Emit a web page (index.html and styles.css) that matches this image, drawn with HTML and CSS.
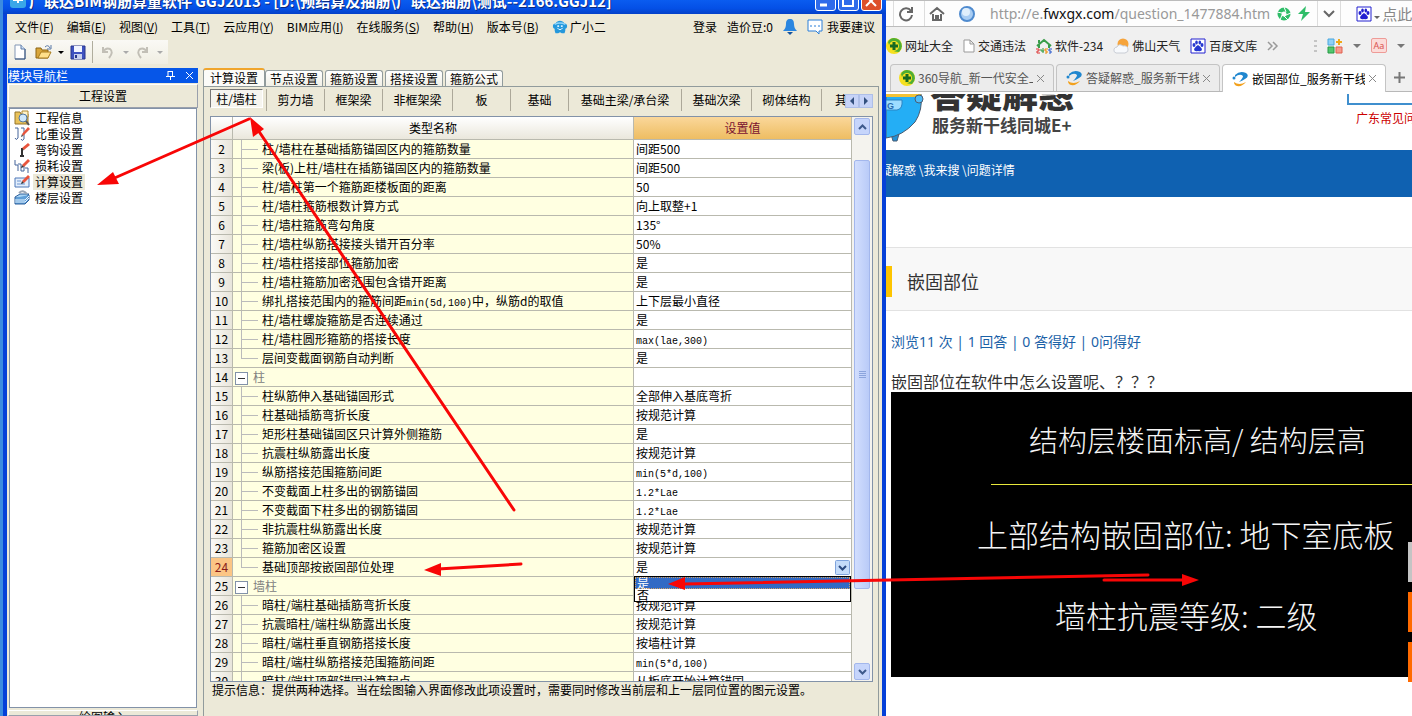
FILE: index.html
```html
<!DOCTYPE html>
<html lang="zh-CN">
<head>
<meta charset="utf-8">
<title>计算设置</title>
<link rel="stylesheet" href="styles.css">
</head>
<body>
<div class="desktop">
<section class="app">
  <header class="titlebar">
    <svg class="app-logo" width="18" height="18" viewBox="0 0 18 18"><rect x="1" y="1" width="16" height="16" rx="3" fill="#3aa7e8"/><path d="M4 9h10M9 6v6" stroke="#fff" stroke-width="2"/></svg>
    <h1 class="title">广联达BIM钢筋算量软件 GGJ2013 - [D:\预结算及抽筋\广联达抽筋\测试--2166.GGJ12]</h1>
    <button class="win-btn" aria-label="最小化"><svg width="18" height="18" viewBox="0 0 18 18"><path d="M4 13h7" stroke="#fff" stroke-width="3"/></svg></button>
    <button class="win-btn" aria-label="最大化"><svg width="18" height="18" viewBox="0 0 18 18"><path d="M4 4h10v10H4z" fill="none" stroke="#fff" stroke-width="2"/></svg></button>
    <button class="win-btn close" aria-label="关闭"><svg width="18" height="18" viewBox="0 0 18 18"><path d="M4 4l10 10M14 4L4 14" stroke="#fff" stroke-width="2"/></svg></button>
  </header>
  <div class="frame">
    <nav class="menu">
      <button>文件(<u>F</u>)</button><button>编辑(<u>E</u>)</button><button>视图(<u>V</u>)</button><button>工具(<u>T</u>)</button><button>云应用(<u>Y</u>)</button><button>BIM应用(<u>I</u>)</button><button>在线服务(<u>S</u>)</button><button>帮助(<u>H</u>)</button><button>版本号(<u>B</u>)</button>
      <button class="with-icon"><svg width="16" height="16" viewBox="0 0 18 16"><path d="M9 1c2 0 4 1 5 3 2 0 3 1 3 3s-1 3-2 3c0 2 0 3-1 5h-3l-2-1-2 1H4c-1-2-1-3-1-5-1 0-2-1-2-3s1-3 3-3c1-2 3-3 5-3z" fill="#2498dc"/><path d="M3 5q6-3 12 0" stroke="#8fd4fa" stroke-width="1.500" fill="none"/><path d="M6 9q3 4 6 0" stroke="#fff" fill="none"/><path d="M6 6h2v2H6zM10 6h2v2h-2z" fill="#d9f2ff"/></svg>广小二</button>
      <div class="account">
        <button>登录</button><span>造价豆:0</span>
        <svg width="14" height="16" viewBox="0 0 14 16"><path d="M7 0c3 0 4 2 4 5 0 3 1 5 3 7H0c2-2 3-4 3-7 0-3 1-5 4-5z" fill="#2a86e0"/><path d="M4 13h6l-3 3z" fill="#14539c"/></svg>
        <button class="with-icon suggest"><svg width="16" height="16" viewBox="0 0 16 16"><path d="M1 1h14v11h-3v3l-3-3H1z" fill="#fff" stroke="#2a7fd8"/><path d="M3 7h2M7 7h2M11 7h2" stroke="#2a7fd8"/></svg>我要建议</button>
      </div>
    </nav>
    <div class="toolbar">
      <button aria-label="新建"><svg width="14" height="16" viewBox="0 0 14 16"><path d="M2 1h6l4 4v10H2z" fill="#fff" stroke="#8397b5"/><path d="M12 5v10H2" stroke="#2f4d78" fill="none"/><path d="M8 1v4h4" fill="#cfe0f5" stroke="#5d7ba8"/></svg></button>
      <button class="open" aria-label="打开"><svg width="18" height="16" viewBox="0 0 18 16"><path d="M1 4h5l1 2h6v8H1z" fill="#d9a63a" stroke="#8c6514"/><path d="M3 14l3-6h10l-3 6z" fill="#ffe08a" stroke="#a87b1c"/><path d="M10 3q3-3 5 1m1-3v4h-4" fill="none" stroke="#5878a8"/></svg></button>
      <span class="caret"></span>
      <button class="save" aria-label="保存"><svg width="16" height="16" viewBox="0 0 16 16"><path d="M1 2h14v13H1z" fill="#3f52c0" stroke="#29358b"/><path d="M4 2h8v6H4z" fill="#f2f5ff"/><path d="M4 10h8v5H4z" fill="#c9d1ee"/><path d="M5 11h2v3H5z" fill="#29358b"/></svg></button>
      <span class="tool-sep"></span>
      <button class="undo" aria-label="撤销" disabled><svg width="14" height="14" viewBox="0 0 14 14"><path d="M2 2v5h5M2 7q3-5 7-3 4 3-1 9" fill="none" stroke="#c2bfb6" stroke-width="2"/></svg></button>
      <span class="caret off"></span>
      <button class="redo" aria-label="重做" disabled><svg width="14" height="14" viewBox="0 0 14 14"><path d="M12 2v5H7M12 7Q9 2 5 4q-4 3 1 9" fill="none" stroke="#c2bfb6" stroke-width="2"/></svg></button>
      <span class="caret off"></span>
    </div>
    <div class="work">
      <aside class="side">
        <div class="side-title"><span>模块导航栏</span>
          <button aria-label="固定"><svg width="9" height="9" viewBox="0 0 9 9"><path d="M2 0v5M6.500 0v5M2 .5h5M0 5.500h9M4.500 6v3" stroke="#fff" fill="none"/></svg></button>
          <button aria-label="关闭面板"><svg width="9" height="9" viewBox="0 0 9 9"><path d="M1 1l7 7M8 1L1 8" stroke="#fff"/></svg></button>
        </div>
        <button class="side-group">工程设置</button>
        <ul class="side-list">
          <li><svg width="16" height="16" viewBox="0 0 16 16"><path d="M1 2h5l1 2h7v10H1z" fill="#e9c25a" stroke="#94742a"/><path d="M8 1h6v6H8z" fill="#fff3c8" stroke="#b0892f"/><circle cx="9" cy="8" r="4" fill="#cfe8fb" stroke="#53779e"/><path d="M12 11l3 4" stroke="#555" stroke-width="2"/></svg><span>工程信息</span></li>
          <li><svg width="16" height="16" viewBox="0 0 16 16"><path d="M1 2h3v10q-2 3-3 0M7 2h3v11q-2 3-3 0" fill="none" stroke="#44659b"/><path d="M8 8l6-7 2 2-7 7z" fill="#e8553d"/><path d="M8 8l-1 3 2-1z" fill="#333"/></svg><span>比重设置</span></li>
          <li><svg width="16" height="16" viewBox="0 0 16 16"><path d="M8 6v8M6 14h4" stroke="#333" stroke-width="2"/><path d="M8 6l6-5 2 2-6 5z" fill="#e8553d"/><path d="M8 6l-1 3 3-1z" fill="#333"/></svg><span>弯钩设置</span></li>
          <li><svg width="16" height="16" viewBox="0 0 16 16"><path d="M1 2v5h3v6M4 6h3v7h3V7M11 10h3v5" fill="none" stroke="#44659b"/><path d="M8 7l6-6 2 2-6 6z" fill="#e8553d"/><path d="M8 7l-1 3 3-1z" fill="#333"/></svg><span>损耗设置</span></li>
          <li class="current"><svg width="16" height="16" viewBox="0 0 16 16"><path d="M1 4h14v9H1z" fill="#e3eefc" stroke="#4f79b8"/><path d="M3 7h4M3 10h8" stroke="#6d95cf"/><path d="M8 7l6-6 2 2-6 6z" fill="#e8553d"/><path d="M8 7l-1 3 3-1z" fill="#333"/></svg><span>计算设置</span></li>
          <li><svg width="16" height="16" viewBox="0 0 16 16"><path d="M1 7l5-3h9l-4 4H1z" fill="#a8d4f5" stroke="#2d5f9b"/><path d="M1 8v6h10l4-4V5" fill="#5f9fd8" stroke="#2d5f9b"/><path d="M1 10h10l4-4M1 12h10l4-4" stroke="#e8f4ff" fill="none"/><path d="M5 3q4-4 8 1" fill="none" stroke="#9aa6b5" stroke-width="2"/></svg><span>楼层设置</span></li>
        </ul>
        <button class="side-group bottom">绘图输入</button>
      </aside>
      <main class="content">
        <div class="tabs">
          <button class="active">计算设置</button><button>节点设置</button><button>箍筋设置</button><button>搭接设置</button><button>箍筋公式</button>
        </div>
        <div class="pane">
          <div class="subtabs">
            <button class="pressed">柱/墙柱</button><button>剪力墙</button><button>框架梁</button><button class="w4">非框架梁</button><button>板</button><button>基础</button><button class="w7">基础主梁/承台梁</button><button class="w4">基础次梁</button><button class="w4">砌体结构</button><button class="cut">其它</button>
            <span class="pager"><button aria-label="上一页"><svg width="6" height="8" viewBox="0 0 6 8"><path d="M5 0v8L1 4z" fill="#33507f"/></svg></button><button aria-label="下一页"><svg width="6" height="8" viewBox="0 0 6 8"><path d="M1 0v8l4-4z" fill="#33507f"/></svg></button></span>
          </div>
          <div class="grid">
            <div class="grid-view">
            <table>
              <colgroup><col class="c-num"><col><col class="c-val"></colgroup>
              <thead><tr><th></th><th>类型名称</th><th class="hot">设置值</th></tr></thead>
              <tbody>
              <tr><th>2</th><td class="n">柱/墙柱在基础插筋锚固区内的箍筋数量</td><td>间距500</td></tr>
              <tr><th>3</th><td class="n">梁(板)上柱/墙柱在插筋锚固区内的箍筋数量</td><td>间距500</td></tr>
              <tr><th>4</th><td class="n">柱/墙柱第一个箍筋距楼板面的距离</td><td>50</td></tr>
              <tr><th>5</th><td class="n">柱/墙柱箍筋根数计算方式</td><td>向上取整+1</td></tr>
              <tr><th>6</th><td class="n">柱/墙柱箍筋弯勾角度</td><td>135°</td></tr>
              <tr><th>7</th><td class="n">柱/墙柱纵筋搭接接头错开百分率</td><td>50%</td></tr>
              <tr><th>8</th><td class="n">柱/墙柱搭接部位箍筋加密</td><td>是</td></tr>
              <tr><th>9</th><td class="n">柱/墙柱箍筋加密范围包含错开距离</td><td>是</td></tr>
              <tr><th>10</th><td class="n">绑扎搭接范围内的箍筋间距<span class="mono">min(5d,100)</span>中，纵筋d的取值</td><td>上下层最小直径</td></tr>
              <tr><th>11</th><td class="n">柱/墙柱螺旋箍筋是否连续通过</td><td>是</td></tr>
              <tr><th>12</th><td class="n">柱/墙柱圆形箍筋的搭接长度</td><td><span class="mono">max(lae,300)</span></td></tr>
              <tr><th>13</th><td class="n end">层间变截面钢筋自动判断</td><td>是</td></tr>
              <tr><th>14</th><td class="g"><button class="fold" aria-label="折叠柱"></button>柱</td><td></td></tr>
              <tr><th>15</th><td class="n">柱纵筋伸入基础锚固形式</td><td>全部伸入基底弯折</td></tr>
              <tr><th>16</th><td class="n">柱基础插筋弯折长度</td><td>按规范计算</td></tr>
              <tr><th>17</th><td class="n">矩形柱基础锚固区只计算外侧箍筋</td><td>是</td></tr>
              <tr><th>18</th><td class="n">抗震柱纵筋露出长度</td><td>按规范计算</td></tr>
              <tr><th>19</th><td class="n">纵筋搭接范围箍筋间距</td><td><span class="mono">min(5*d,100)</span></td></tr>
              <tr><th>20</th><td class="n">不变截面上柱多出的钢筋锚固</td><td><span class="mono">1.2*Lae</span></td></tr>
              <tr><th>21</th><td class="n">不变截面下柱多出的钢筋锚固</td><td><span class="mono">1.2*Lae</span></td></tr>
              <tr><th>22</th><td class="n">非抗震柱纵筋露出长度</td><td>按规范计算</td></tr>
              <tr><th>23</th><td class="n">箍筋加密区设置</td><td>按规范计算</td></tr>
              <tr class="sel"><th>24</th><td class="n end"><label for="v24">基础顶部按嵌固部位处理</label></td><td class="edit"><select id="v24"><option selected>是</option><option>否</option></select><svg class="drop-arrow" width="15" height="15" viewBox="0 0 15 15"><rect x=".5" y=".5" width="14" height="14" rx="1" fill="#c5dcfa" stroke="#7fa3dc"/><path d="M4 6l3.500 3.500L11 6" fill="none" stroke="#2b4a80" stroke-width="2"/></svg><div class="droplist"><div class="on">是</div><div>否</div></div></td></tr>
              <tr><th>25</th><td class="g"><button class="fold" aria-label="折叠墙柱"></button>墙柱</td><td></td></tr>
              <tr><th>26</th><td class="n">暗柱/端柱基础插筋弯折长度</td><td>按规范计算</td></tr>
              <tr><th>27</th><td class="n">抗震暗柱/端柱纵筋露出长度</td><td>按规范计算</td></tr>
              <tr><th>28</th><td class="n">暗柱/端柱垂直钢筋搭接长度</td><td>按墙柱计算</td></tr>
              <tr><th>29</th><td class="n">暗柱/端柱纵筋搭接范围箍筋间距</td><td><span class="mono">min(5*d,100)</span></td></tr>
              <tr><th>30</th><td class="n">暗柱/端柱顶部锚固计算起点</td><td>从板底开始计算锚固</td></tr>
              </tbody>
            </table>
            </div>
            <div class="scroll">
              <button aria-label="向上滚动"><svg width="9" height="6" viewBox="0 0 9 6"><path d="M1 5l3.500-3.500L8 5" fill="none" stroke="#3e5a8c" stroke-width="2"/></svg></button>
              <div class="track"><div class="thumb"><i></i></div></div>
              <button aria-label="向下滚动"><svg width="9" height="6" viewBox="0 0 9 6"><path d="M1 1l3.500 3.500L8 1" fill="none" stroke="#3e5a8c" stroke-width="2"/></svg></button>
            </div>
          </div>
          <p class="hint">提示信息：提供两种选择。当在绘图输入界面修改此项设置时，需要同时修改当前层和上一层同位置的图元设置。</p>
        </div>
      </main>
    </div>
  </div>
</section>

<section class="browser">
  <div class="address">
    <span class="back"></span>
    <button class="cell" aria-label="刷新"><svg width="16" height="16" viewBox="0 0 16 16"><path d="M13 5a6 6 0 1 0 1 4M14 1v5H9" fill="none" stroke="#666" stroke-width="2"/></svg></button>
    <button class="cell" aria-label="主页"><svg width="16" height="16" viewBox="0 0 16 16"><path d="M1 8l7-6 7 6M4 8v6h3v-4h2v4h3V8" fill="none" stroke="#666" stroke-width="2"/></svg></button>
    <svg class="globe" width="16" height="16" viewBox="0 0 16 16"><circle cx="8" cy="8" r="7" fill="#a9cdf3" stroke="#4f8bcf" stroke-width="2"/><circle cx="7" cy="6" r="4" fill="#e0effc"/></svg>
    <span class="url">http://e.<b>fwxgx.com</b>/question_1477884.htm</span>
    <svg width="14" height="14" viewBox="0 0 14 14"><circle cx="7" cy="7" r="4.500" fill="none" stroke="#2fbd68" stroke-width="4" /><path d="M7 0l2 5M14 6L9 8M11 13L7 9M3 13l2-5M0 5l5 1" stroke="#fff"/></svg>
    <svg width="12" height="15" viewBox="0 0 12 15"><path d="M8 0L0 8h5l-2 7 9-9H7z" fill="#2fbd68"/></svg>
    <button class="cell more" aria-label="展开"><svg width="14" height="10" viewBox="0 0 14 10"><path d="M2 2l5 5 5-5" fill="none" stroke="#666" stroke-width="2"/></svg></button>
    <svg class="paw" width="16" height="16" viewBox="0 0 16 16"><path d="M1 1h14v14H1z" fill="#fff" stroke="#2220d0" stroke-width="1"/><g fill="#2220d0"><ellipse cx="4" cy="7" rx="1.500" ry="2"/><ellipse cx="6.500" cy="4.500" rx="1.300" ry="2"/><ellipse cx="9.800" cy="4.500" rx="1.300" ry="2"/><ellipse cx="12" cy="7" rx="1.500" ry="2"/><path d="M8 7q2 1 4 4 0 3-4 2-4 1-4-2 2-3 4-4z"/></g></svg>
    <span class="caret small"></span><span class="search">点此搜索</span>
  </div>
  <div class="bookmarks">
    <a href="#"><svg width="16" height="16" viewBox="0 0 16 16"><circle cx="8" cy="8" r="8" fill="#f5e020"/><path d="M8 0a8 8 0 0 1 5 14Q4 14 2 4 4 0 8 0z" fill="#4eae33"/><circle cx="8" cy="8" r="5" fill="#f5e020"/><path d="M8 4v8M4 8h8" stroke="#176b22" stroke-width="3"/></svg>网址大全</a>
    <a href="#"><svg width="12" height="14" viewBox="0 0 12 14"><path d="M1 1h6l4 4v8H1zM7 1v4h4" fill="#fff" stroke="#999"/></svg>交通违法</a>
    <a href="#"><svg width="16" height="16" viewBox="0 0 16 16"><path d="M1 8l7-6 7 6M3 7v3M13 7v3M3 2v3" fill="none" stroke="#3a9d4a" stroke-width="2"/><path d="M0 11h3v2H1v2h3" stroke="#d33" fill="none"/><path d="M5 11v2h3M7 10v5" stroke="#2a9a3a" fill="none"/><path d="M12 11H9v2h2v2H9" stroke="#e80" fill="none"/><path d="M16 11h-3v2h2v2h-2" stroke="#25c" fill="none"/></svg>软件-234</a>
    <a href="#"><svg width="16" height="16" viewBox="0 0 16 16"><circle cx="10" cy="6" r="5.500" fill="#f6a43c"/><path d="M3 15q-3-1-2-4 1-2 3-2 2-4 6-1 4-1 5 3 1 3-3 4z" fill="#f7f9fc" stroke="#c8ccd4"/></svg>佛山天气</a>
    <a href="#"><svg width="16" height="16" viewBox="0 0 16 16"><path d="M1 1h14v14H1z" fill="#fff" stroke="#2220d0" stroke-width="1"/><g fill="#2638d0"><ellipse cx="4" cy="7" rx="1.500" ry="2"/><ellipse cx="6.500" cy="4.500" rx="1.300" ry="2"/><ellipse cx="9.800" cy="4.500" rx="1.300" ry="2"/><ellipse cx="12" cy="7" rx="1.500" ry="2"/><path d="M8 7q2 1 4 4 0 3-4 2-4 1-4-2 2-3 4-4z"/></g></svg>百度文库</a>
    <svg width="12" height="10" viewBox="0 0 12 10"><path d="M1 1l4 4-4 4M6 1l4 4-4 4" fill="none" stroke="#999" stroke-width="1.500"/></svg>
    <div class="plugins">
      <svg width="3" height="14" viewBox="0 0 3 14"><path d="M0 1h3v2H0zM0 6h3v2H0zM0 11h3v2H0z" fill="#c4c4c4"/></svg>
      <svg class="apps" width="16" height="16" viewBox="0 0 16 16"><path d="M1 1h6v6H1z" fill="#8fd0f7" stroke="#4aa8e0"/><path d="M1 9h6v6H1z" fill="#53c66e" stroke="#259a45"/><path d="M9 9h6v6H9z" fill="#f69a8d" stroke="#e0604f"/><path d="M12 1v6M9 4h6" stroke="#f0a818" stroke-width="2"/></svg>
      <span class="caret gray"></span>
      <span class="aa">Aa</span>
      <span class="caret gray"></span>
    </div>
  </div>
  <div class="btabs">
    <div class="btab"><svg width="16" height="16" viewBox="0 0 16 16"><circle cx="8" cy="8" r="8" fill="#f5e020"/><path d="M8 0a8 8 0 0 1 5 14Q4 14 2 4 4 0 8 0z" fill="#4eae33"/><circle cx="8" cy="8" r="5" fill="#f5e020"/><path d="M8 4v8M4 8h8" stroke="#176b22" stroke-width="3"/></svg><span>360导航_新一代安全上网</span><button aria-label="关闭标签"><svg width="9" height="9" viewBox="0 0 9 9"><path d="M1 1l7 7M8 1L1 8" stroke="#888"/></svg></button></div>
    <div class="btab"><svg width="18" height="16" viewBox="0 0 18 16"><path d="M4 4q5-5 11-2 4 3-1 6-3 2-6 3 4-4 4-6-3-3-8 1z" fill="#2087cf"/><path d="M3 11q5 4 12 0-4 5-9 4-3-1-3-4z" fill="#f2a11e"/><circle cx="3" cy="7" r="1.500" fill="#2087cf"/></svg><span>答疑解惑_服务新干线</span><button aria-label="关闭标签"><svg width="9" height="9" viewBox="0 0 9 9"><path d="M1 1l7 7M8 1L1 8" stroke="#888"/></svg></button></div>
    <div class="btab active"><svg width="18" height="16" viewBox="0 0 18 16"><path d="M4 4q5-5 11-2 4 3-1 6-3 2-6 3 4-4 4-6-3-3-8 1z" fill="#2087cf"/><path d="M3 11q5 4 12 0-4 5-9 4-3-1-3-4z" fill="#f2a11e"/><circle cx="3" cy="7" r="1.500" fill="#2087cf"/></svg><span>嵌固部位_服务新干线</span><button aria-label="关闭标签"><svg width="9" height="9" viewBox="0 0 9 9"><path d="M1 1l7 7M8 1L1 8" stroke="#888"/></svg></button></div>
    <button class="newtab" aria-label="新标签"><svg width="11" height="11" viewBox="0 0 11 11"><path d="M5.500 0v11M0 5.500h11" stroke="#777" stroke-width="2"/></svg></button>
  </div>
  <div class="page">
    <div class="brand">
      <svg class="mascot" width="42" height="48" viewBox="0 0 42 48"><path d="M5 40h8l-2 7H7z" fill="#2390d4" stroke="#4a5c72"/><path d="M0 0h35q2 16-6 28Q17 42 0 44z" fill="#24aef5" stroke="#4a5c72"/><path d="M0 0h35l-2 3H0z" fill="#f2c236"/><path d="M0 6h16q1 9-5 10H0z" fill="#9edcff" stroke="#2b84c4"/><circle cx="33" cy="5" r="4" fill="#4dbcf8" stroke="#4a5c72"/><text x="1" y="15" class="mascot-text">G</text></svg>
      <div class="brand-text"><strong>答疑解惑</strong><span>服务新干线同城E+</span></div>
      <div class="quick"><div class="quick-box"></div><a href="#">广东常见问题</a></div>
    </div>
    <nav class="crumbs">疑解惑 \我来搜 \问题详情</nav>
    <div class="heading"><h2>嵌固部位</h2></div>
    <p class="stats">浏览11 次 | 1 回答 | 0 答得好 | 0问得好</p>
    <p class="question">嵌固部位在软件中怎么设置呢、？？？</p>
    <figure class="cad">
      <div class="cad-title">结构层楼面标高/ 结构层高</div>
      <div class="cad-line">上部结构嵌固部位: 地下室底板</div>
      <div class="cad-line third">墙柱抗震等级: 二级</div>
    </figure>
    <div class="floaters"><i class="gray"></i><i></i><i></i></div>
  </div>
</section>
<svg class="marks" viewBox="0 0 1412 716" preserveAspectRatio="none">
  <g stroke="#f80606" stroke-width="3" stroke-linecap="round" fill="none"><path d="M249 119L110 180M514 510L258 130M521 564L438 569M1148 575L684 584M1104 580L1184 580"/></g>
  <g fill="#f80606"><path d="M97 185l16-13 6 12zM250 117l14 12-11 8zM424 570l17-7v13zM668 584l17-7v13zM1199 580l-17-6v12z"/></g>
</svg>
</div>
</body>
</html>
```
FILE: styles.css
```css
* { box-sizing: border-box; }
body { margin: 0; font: 12px/16px "Noto Sans CJK SC", sans-serif; color: #000; overflow: hidden; }
button { font: inherit; color: inherit; border: 0; padding: 0; background: none; white-space: nowrap; }
svg { display: block; flex: none; }
h1, h2, p, ul, figure { margin: 0; padding: 0; }
.desktop { position: relative; display: grid; grid-template-columns: 886fr 526fr; height: 100vh; overflow: hidden; }

/* application window */
.app { display: flex; flex-direction: column; min-width: 0; height: 100vh; border-left: 3px solid #3b8be0; background: #0540d8; }
.titlebar { flex: none; display: flex; align-items: flex-end; gap: 2px; height: 14px; padding: 0 4px 0 6px; overflow: hidden; background: linear-gradient(#0a5cf0, #0450e6 60%, #0340c8); }
.title { flex: 1; min-width: 0; overflow: hidden; white-space: nowrap; color: #fff; font: bold 15px/26px "Noto Sans CJK SC", sans-serif; text-shadow: 1px 1px #0a2a80; }
.app-logo { margin-bottom: 5px; }
.win-btn { flex: none; width: 21px; height: 21px; margin-bottom: 3px; border: 1px solid #fff; border-radius: 3px; background: #2f6bea; }
.win-btn.close { background: #dd4f2a; }
.frame { flex: 1; min-height: 0; display: flex; flex-direction: column; border: solid #0540d8; border-width: 0 4px; background: #ece9d8; }
.menu { flex: none; display: flex; align-items: center; gap: 13px; height: 26px; padding: 0 7px 0 8px; white-space: nowrap; }
.with-icon { display: flex; align-items: center; gap: 2px; }
.account { flex: 1; display: flex; justify-content: flex-end; align-items: center; gap: 10px; }
.account .suggest { gap: 4px; }
.toolbar { flex: none; display: flex; align-items: center; align-self: flex-start; height: 24px; padding: 0 5px 0 6px; background: linear-gradient(#faf9f5, #f0eee2); }
.toolbar .open { margin-left: 8px; }
.toolbar .save { margin-left: 6px; }
.toolbar .redo { margin-left: 6px; }
.caret { width: 0; height: 0; margin-left: 5px; border: 3px solid transparent; border-top-color: #000; border-bottom: 0; }
.caret.off { border-top-color: #aaa; margin-left: 8px; }
.tool-sep { width: 1px; height: 22px; margin: 0 8px 0 6px; background: #b0ad9d; }
.work { flex: 1; min-height: 0; display: flex; gap: 5px; padding: 4px 3px 0 1px; }

.side { flex: 0 0 190px; display: flex; flex-direction: column; min-height: 0; }
.side-title { display: flex; align-items: center; gap: 10px; height: 15px; padding-right: 4px; color: #fff; background: #0656e8; }
.side-title span { flex: 1; }
.side-group { flex: none; height: 24px; margin: 1px 0 0; border: 1px solid; border-color: #fff #9aa0ac #9aa0ac #fff; background: #ece9d8; }
.side-list { flex: 1; min-height: 0; margin: 0 1px 1px; padding-top: 1px; list-style: none; border: 1px solid #8292a8; background: #fff; }
.side-list li { display: flex; align-items: center; gap: 3px; height: 16px; padding-left: 4px; }
.side-list span { padding: 0 2px; }
.side-list .current span { background: #ece9d8; }
.side-group.bottom { height: 6px; line-height: 12px; overflow: hidden; }

.content { flex: 1; min-width: 0; min-height: 0; display: flex; flex-direction: column; }
.tabs { flex: none; display: flex; align-items: flex-end; gap: 2px; height: 18px; }
.tabs button { width: 58px; height: 16px; border: 1px solid #919b9c; border-bottom: 0; border-radius: 3px 3px 0 0; background: linear-gradient(#fff, #f0efe6); line-height: 16px; }
.tabs .active { width: 62px; height: 18px; margin-right: -2px; border-top: 2px solid #f0a52c; background: #fbfbf8; }
.pane { flex: 1; min-height: 0; display: flex; flex-direction: column; padding: 2px 5px 18px 6px; border: solid #919b9c; border-width: 1px 1px 0; background: #ece9d8; }
.subtabs { flex: none; position: relative; display: flex; height: 22px; margin-bottom: 5px; overflow: hidden; }
.subtabs button { flex: none; width: 58px; border-right: 1px solid #aca899; }
.subtabs .pressed { width: 53px; height: 19px; margin-right: 3px; border: 1px solid; border-color: #777 #fff #fff #777; background: #f6f5ef; }
.subtabs .pressed + button { width: 59px; border-left: 1px solid #aca899; }
.subtabs .w4 { width: 70px; }
.subtabs .w7 { width: 113px; }
.subtabs .cut { width: 50px; border: 0; }
.subtabs .pager { position: absolute; right: 0; top: 5px; display: flex; height: 14px; background: #ece9d8; }
.subtabs .pager button { display: grid; place-items: center; width: 14px; border: 1px solid #aebfe8; background: #c6d3f7; }
.grid { flex: 1; min-height: 0; display: flex; border: 1px solid #8292a8; background: #fff; }
.grid-view { flex: 1; min-width: 0; overflow: hidden; }
table { width: 100%; table-layout: fixed; border-collapse: separate; border-spacing: 0; }
.c-num { width: 22px; }
.c-val { width: 34%; }
th, td { height: 19px; padding: 0; border: solid #b9b9ae; border-width: 0 1px 1px 0; line-height: 16px; text-align: left; font-weight: normal; white-space: nowrap; overflow: hidden; }
thead th { height: 23px; text-align: center; background: linear-gradient(#fff, #eae7dc); }
thead .hot { color: #7a1230; background: linear-gradient(#fad79a, #eebd62); }
tbody th { text-align: center; background: linear-gradient(90deg, #fbfaf6, #e8e5db); }
.sel th { color: #8a1a1a; background: #fbc585; }
td { padding-left: 2px; }
.n, .g { background-color: #ffffe1; }
.n { padding-left: 29px; background-image: linear-gradient(#bbb, #bbb), linear-gradient(#bbb, #bbb); background-repeat: no-repeat; background-position: 8px 0, 8px 9px; background-size: 1px 100%, 17px 1px; }
.n.end { background-size: 1px 9px, 17px 1px; }
.g { padding-left: 2px; color: #808080; }
.fold { display: inline-block; width: 13px; height: 13px; margin-right: 5px; vertical-align: middle; border: 1px solid #8292a8; background: linear-gradient(#333, #333) center / 7px 1px no-repeat #fff; }
.mono { font: 10px/10px "Liberation Mono", monospace; }
.edit { position: relative; overflow: visible; }
.edit select { display: block; width: 100%; height: 16px; padding: 0; border: 0; appearance: none; background: none; font: inherit; color: #000; }
.drop-arrow { position: absolute; right: 1px; top: 2px; }
.droplist { position: absolute; left: 0; right: 0; top: 18px; z-index: 1; border: 1px solid #000; background: #fff; }
.droplist div { height: 12px; padding-left: 2px; line-height: 12px; overflow: hidden; }
.droplist .on { color: #fff; background: #316ac5; outline: 1px dotted #d0a060; outline-offset: -1px; }
.scroll { flex: 0 0 20px; display: flex; flex-direction: column; padding: 1px; background: #f4f3ee; }
.scroll button { display: grid; place-items: center; height: 17px; margin: 0 1px; border: 1px solid #a3b7ec; border-radius: 2px; background: #c6d5fb; }
.track { flex: 1; display: flex; flex-direction: column; padding: 25px 1px 74px; }
.thumb { flex: 1; display: grid; place-items: center; border: 1px solid #a3b7ec; border-radius: 2px; background: linear-gradient(90deg, #d2defd, #b9cbf8); }
.thumb i { width: 7px; height: 8px; background: repeating-linear-gradient(#8ba4dc 0 1px, transparent 1px 2px); }
.hint { flex: none; height: 16px; padding-left: 2px; white-space: nowrap; overflow: hidden; }

/* browser window */
.browser { min-width: 0; height: 100vh; display: flex; flex-direction: column; overflow: hidden; background: #f0f0f0; white-space: nowrap; }
.address { flex: none; display: flex; align-items: center; gap: 7px; height: 27px; border: solid #bcbcbc; border-width: 1px 0; background: #fdfdfd; }
.back { width: 7px; }
.cell { flex: none; align-self: stretch; display: grid; place-items: center; width: 24px; border-left: 1px solid #ddd; }
.globe { margin: 0 8px 0 4px; }
.url { flex: none; font: 14px/20px "Noto Sans", sans-serif; color: #999; }
.url b { font-weight: normal; color: #111; }
.cell.more { border-right: 1px solid #ddd; }
.paw { margin-left: 8px; }
.caret.small { margin: 8px -5px 0 -5px; border-top-color: #666; }
.search { font-size: 15px; color: #888; }
.bookmarks { flex: none; display: flex; align-items: center; gap: 10px; height: 37px; padding-right: 7px; }
.bookmarks a { display: flex; align-items: center; gap: 3px; color: #222; text-decoration: none; }
.plugins { flex: 1; display: flex; justify-content: flex-end; align-items: center; gap: 10px; }
.caret.gray { margin: 0; border-width: 4px 4px 0; border-top-color: #777; }
.aa { width: 16px; height: 15px; border: 1px solid #ee9b97; border-radius: 2px; background: #fbdcd9; color: #d9534f; font: 9px/13px "Noto Sans", sans-serif; text-align: center; }
.btabs { flex: none; display: flex; height: 28px; padding-left: 4px; border-bottom: 1px solid #b8b8b8; }
.btab { flex: 0 1 164px; min-width: 0; display: flex; align-items: center; gap: 3px; margin-right: 2px; padding: 0 8px; border: 1px solid #c4c4c4; border-bottom: 0; border-radius: 4px 4px 0 0; background: #ececec; color: #555; }
.btab span { flex: 1; min-width: 0; overflow: hidden; }
.btab.active { margin-bottom: -1px; background: #fff; color: #000; }
.newtab { flex: none; padding: 0 6px; }
.page { position: relative; flex: 1; min-height: 0; overflow: hidden; background: #fff; }
.brand { display: flex; height: 58px; padding-top: 2px; overflow: hidden; }
.mascot-text { font: bold 9px "Liberation Sans", sans-serif; fill: #2b6cb0; }
.brand-text { flex: 1; display: flex; flex-direction: column; padding-left: 2px; color: #333; font-weight: bold; }
.brand-text strong { height: 19px; display: flex; align-items: flex-end; overflow: hidden; font-size: 36px; line-height: 42px; font-weight: 900; }
.brand-text span { padding-left: 2px; font-size: 17px; line-height: 24px; font-weight: bold; color: #444; }
.quick { width: 65px; overflow: hidden; }
.quick-box { height: 11px; border: solid #3f8fce; border-width: 0 0 2px 2px; }
.quick a { display: block; padding: 5px 0 0 9px; color: #c00; text-decoration: none; }
.crumbs { height: 47px; line-height: 40px; color: #fff; background: #0f61b1; text-indent: -6px; overflow: hidden; }
.heading { display: flex; align-items: center; height: 64px; margin-top: 50px; padding-top: 4px; border: solid #e2e2e2; border-width: 1px 0; background: #f8f8f8; }
.heading h2 { padding-left: 15px; border-left: 6px solid #fdc400; border-radius: 0 2px 2px 0; font-size: 18px; line-height: 31px; font-weight: normal; color: #333; }
.stats { padding: 20px 0 0 5px; font: 14px/22px "Noto Sans", "Noto Sans CJK SC", sans-serif; color: #1b62a8; }
.question { padding: 17px 0 0 5px; font-size: 16px; line-height: 22px; color: #333; }
.cad { height: 285px; margin-left: 5px; padding-top: 10px; color: #f4f4f4; background: #000; font-weight: 300; }
.cad-title { margin-left: 100px; padding: 0 0 8px 38px; border-bottom: 1px solid #e8e83c; font-size: 29px; line-height: 74px; }
.cad-line { padding-left: 86px; font-size: 31px; line-height: 98px; }
.cad-line.third { padding-left: 164px; line-height: 64px; }
.floaters { position: absolute; right: 0; top: 450px; display: grid; gap: 10px; }
.floaters i { width: 4px; height: 40px; background: #ff6a00; }
.floaters .gray { background: #c4c4c4; }
.marks { position: absolute; left: 0; top: 0; width: 100%; height: 100%; pointer-events: none; z-index: 2; }
```
